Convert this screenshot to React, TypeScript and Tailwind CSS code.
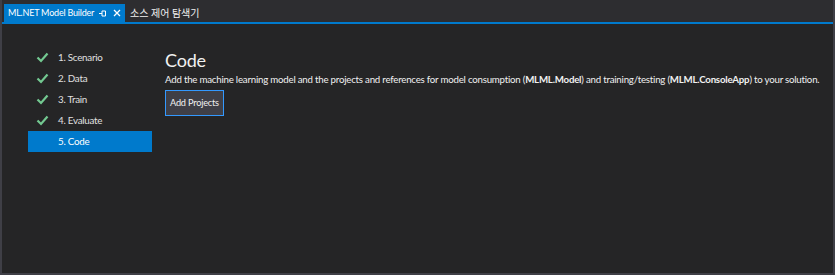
import React from 'react';

const font = { fontFamily: 'Lato, "Noto Sans CJK KR", sans-serif' };

const Check: React.FC = () => (
  <svg width="13" height="11" viewBox="0 0 13 11" className="shrink-0">
    <path d="M1.5 5.5 L5 9 L11.5 1.5" fill="none" stroke="#73c991" strokeWidth="2.2" />
  </svg>
);

const steps = ['1. Scenario', '2. Data', '3. Train', '4. Evaluate'];

const App: React.FC = () => {
  return (
    <div
      className="w-[835px] h-[275px] bg-[#2d2d30] border-x-2 border-b-2 border-[#3f3f46] flex flex-col overflow-hidden"
      style={font}
    >
      {/* tab strip */}
      <div className="flex items-end h-[24px] pl-[2px] pt-[4px] border-b-2 border-[#007acc] shrink-0">
        <div className="h-[18px] w-[121px] bg-[#007acc] text-white text-[9px] tracking-[-0.2px] whitespace-nowrap flex items-center pl-[4px] pr-[4px]">
          <span className="flex-1">ML.NET Model Builder</span>
          <svg width="9" height="9" viewBox="0 0 9 9" className="mr-[6px] shrink-0">
            <path d="M1 4.5 H4 M4 2 V7 M4 2 H7.5 V7 H4" fill="none" stroke="white" strokeWidth="1" />
          </svg>
          <svg width="8" height="8" viewBox="0 0 8 8" className="shrink-0">
            <path d="M1 1 L7 7 M7 1 L1 7" stroke="white" strokeWidth="1.3" />
          </svg>
        </div>
        <div className="h-[18px] text-[#f1f1f1] text-[10px] whitespace-nowrap flex items-center pl-[5px]">소스 제어 탐색기</div>
      </div>

      {/* content */}
      <div className="flex-1 bg-[#252526] flex pt-[23px]">
        <div className="w-[124px] ml-[26px] shrink-0 flex flex-col text-[9.8px] tracking-[-0.25px]">
          {steps.map((s) => (
            <div key={s} className="h-[21px] flex items-center text-[#e0e0e0] whitespace-nowrap">
              <div className="w-[30px] flex justify-end pr-[9px]">
                <Check />
              </div>
              <span>{s}</span>
            </div>
          ))}
          <div className="h-[21px] flex items-center text-white bg-[#007acc] pl-[30px]">5. Code</div>
        </div>
        <div className="ml-[13px] flex flex-col items-start">
          <div className="text-[18px] leading-[22px] tracking-[-0.2px] text-[#f1f1f1] mt-[2px]">Code</div>
          <div className="text-[9.7px] leading-[14px] tracking-[-0.22px] text-[#f1f1f1] whitespace-nowrap mt-[1px]">
            Add the machine learning model and the projects and references for model consumption (
            <b>MLML.Model</b>) and training/testing (<b>MLML.ConsoleApp</b>) to your solution.
          </div>
          <button className="mt-[4px] h-[26px] px-[4px] bg-[#3f3f46] border border-[#3399ff] text-[9.2px] tracking-[-0.2px] text-[#f1f1f1]">
            Add Projects
          </button>
        </div>
      </div>
    </div>
  );
};

export default App;
